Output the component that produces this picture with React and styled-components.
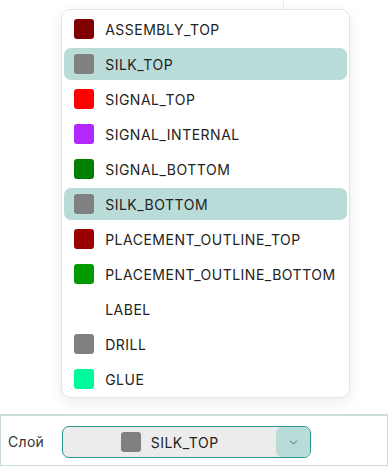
import { createGlobalStyle } from "styled-components";
import styled from "styled-components";
import { ChevronDown } from "lucide-react";

const GlobalStyle = createGlobalStyle`
  html, body {
    margin: 0;
    padding: 0;
    background: #ffffff;
    font-family: Inter, "Noto Sans", sans-serif;
  }
`;

const layers = [
  { name: "ASSEMBLY_TOP", color: "#800000" },
  { name: "SILK_TOP", color: "#808080" },
  { name: "SIGNAL_TOP", color: "#ff0000" },
  { name: "SIGNAL_INTERNAL", color: "#b328ff" },
  { name: "SIGNAL_BOTTOM", color: "#008000" },
  { name: "SILK_BOTTOM", color: "#808080" },
  { name: "PLACEMENT_OUTLINE_TOP", color: "#990000" },
  { name: "PLACEMENT_OUTLINE_BOTTOM", color: "#009900" },
  { name: "LABEL", color: "transparent" },
  { name: "DRILL", color: "#808080" },
  { name: "GLUE", color: "#00fa9a" },
];

const highlighted = ["SILK_TOP", "SILK_BOTTOM"];

const Page = styled.div`
  height: 466px;
  display: flex;
  flex-direction: column;
  overflow: hidden;
`;

const Workspace = styled.div`
  flex: 1;
  display: flex;
  align-items: flex-start;
`;

const Pane = styled.div`
  width: 283px;
  height: 360px;
  border-right: 1px solid #ececec;
`;

const Bar = styled.div`
  height: 52px;
  box-sizing: border-box;
  display: flex;
  align-items: flex-start;
  gap: 18px;
  padding: 10px 0 0 7px;
  border: 1px solid #cddcdc;
  border-top-width: 2px;
`;

const Label = styled.span`
  font-size: 14px;
  letter-spacing: 0.3px;
  line-height: 32px;
  color: #333;
`;

const SelectWrap = styled.div`
  position: relative;
`;

const Select = styled.div`
  width: 249px;
  height: 32px;
  box-sizing: border-box;
  display: flex;
  border: 1px solid #2a9690;
  border-radius: 7px;
  background: #ececec;
  overflow: hidden;
`;

const Value = styled.div`
  flex: 1;
  display: flex;
  align-items: center;
  justify-content: center;
  gap: 10px;
  font-size: 14px;
  letter-spacing: 0.5px;
  color: #222;
`;

const Toggle = styled.div`
  width: 34px;
  display: flex;
  align-items: center;
  justify-content: center;
  background: #badcd9;
  border-radius: 6px;
  color: #1f6b66;
`;

const Swatch = styled.span`
  width: 20px;
  height: 20px;
  border-radius: 3px;
  background: ${({ color }) => color};
  flex-shrink: 0;
`;

const Menu = styled.div`
  position: absolute;
  left: -1px;
  bottom: calc(100% + 28px);
  width: 289px;
  box-sizing: border-box;
  padding: 3px 2px 2px;
  display: flex;
  flex-direction: column;
  gap: 3px;
  background: #fff;
  border: 1px solid #e4e4e4;
  border-radius: 9px;
  box-shadow: 0 4px 14px rgba(0, 0, 0, 0.08);
`;

const Item = styled.div`
  height: 32px;
  display: flex;
  align-items: center;
  gap: 11px;
  padding-left: 10px;
  border-radius: 7px;
  font-size: 14px;
  letter-spacing: 0.5px;
  color: #222;
  background: ${({ active }) => (active ? "#badcd9" : "transparent")};
`;

export default function App() {
  return (
    <Page>
      <GlobalStyle />
      <Workspace>
        <Pane />
      </Workspace>
      <Bar>
        <Label>Слой</Label>
        <SelectWrap>
          <Menu>
            {layers.map((l) => (
              <Item key={l.name} active={highlighted.includes(l.name)}>
                <Swatch color={l.color} />
                {l.name}
              </Item>
            ))}
          </Menu>
          <Select>
            <Value>
              <Swatch color="#808080" />
              SILK_TOP
            </Value>
            <Toggle>
              <ChevronDown size={13} strokeWidth={1.6} />
            </Toggle>
          </Select>
        </SelectWrap>
      </Bar>
    </Page>
  );
}
